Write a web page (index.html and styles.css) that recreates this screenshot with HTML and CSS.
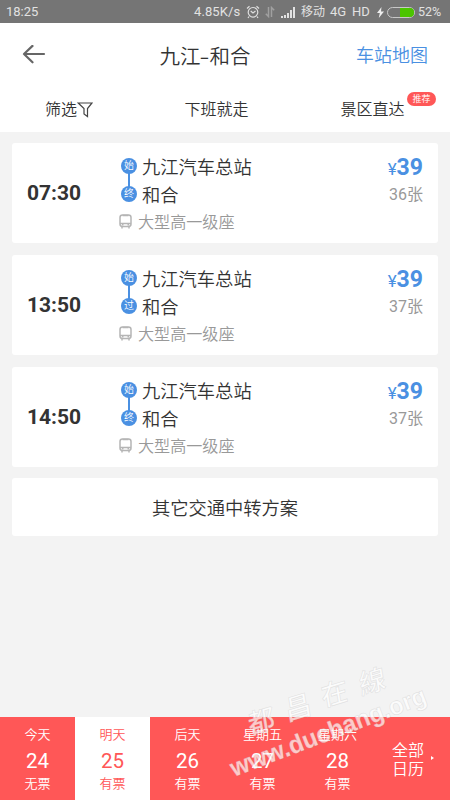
FILE: index.html
```html
<!DOCTYPE html>
<html lang="zh-CN">
<head>
<meta charset="utf-8">
<title>九江-和合</title>
<link rel="stylesheet" href="styles.css">
</head>
<body>
<div class="status">
  <span class="clock">18:25</span>
  <span class="speed">4.85K/s</span>
  <svg class="alarm" width="14" height="14" viewBox="0 0 14 14" fill="none" stroke="#dedede" stroke-width="1.2"><circle cx="7" cy="7.3" r="4.8"/><path d="M1 3.5 3.5 1.2M13 3.5 10.500 1.200M3 11.500 2 13M11 11.500 12 13M4.700 6 7 8 9.500 6"/></svg>
  <svg class="data" width="10" height="12" viewBox="0 0 10 12" fill="none" stroke="#a0a0a0" stroke-width="1.500"><path d="M3.500 1v9.500L.8 7.800M6.500 11V1.500L9.200 4.200"/></svg>
  <svg class="signal" width="15" height="11" viewBox="0 0 15 11" fill="#e2e2e2"><path d="M0 9h2v2H0zM3 8h2v3H3zM6 6h2v5H6zM9 3h2v8H9zM12 0h2v11h-2z"/></svg>
  <span class="carrier">移动</span>
  <span class="net">4G</span>
  <span class="hd">HD</span>
  <svg class="bolt" width="7" height="11" viewBox="0 0 7 11" fill="#eee"><path d="M4.500 0 0 6h2.800L1.800 11 7 4.500H4z"/></svg>
  <span class="battery"><span class="charge"></span></span>
  <span class="percent">52%</span>
</div>
<header class="header">
  <svg width="24" height="20" viewBox="0 0 24 20" fill="none" stroke="#666" stroke-width="2.200" stroke-linecap="round" stroke-linejoin="round"><path d="M22 9H2M10.500 .9 2 9l8.500 8.300"/></svg>
  <h1 class="title">九江<span class="dash">-</span>和合</h1>
  <span class="map">车站地图</span>
</header>
<nav class="tabs">
  <span class="tab filter">筛选<svg width="16" height="16" viewBox="0 0 16 16" fill="none" stroke="#444" stroke-width="1.200"><path d="M1.200 1H15L10.500 6.500v8L7 12V6.500z"/></svg></span>
  <span class="tab">下班就走</span>
  <span class="tab direct">景区直达<span class="badge">推荐</span></span>
</nav>
<main class="list">
  <article class="card">
    <time class="time">07:30</time>
    <div class="route">
      <div class="stop linked"><span class="dot">始</span>九江汽车总站</div>
      <div class="stop"><span class="dot">终</span>和合</div>
      <div class="seat"><svg width="13" height="15" viewBox="0 0 13 15" fill="none" stroke="#b5b5b5" stroke-width="1.500"><rect x="1" y="1" width="11" height="11.500" rx="2.500"/><path d="M1 9.500h11M3.500 1.500h6M3 12v2.500M10 12v2.500M3 10.700h1.500M8.500 10.700H10"/></svg>大型高一级座</div>
    </div>
    <div class="fare"><div class="price"><span class="yen">¥</span>39</div><div class="left">36张</div></div>
  </article>
  <article class="card">
    <time class="time">13:50</time>
    <div class="route">
      <div class="stop linked"><span class="dot">始</span>九江汽车总站</div>
      <div class="stop"><span class="dot">过</span>和合</div>
      <div class="seat"><svg width="13" height="15" viewBox="0 0 13 15" fill="none" stroke="#b5b5b5" stroke-width="1.500"><rect x="1" y="1" width="11" height="11.500" rx="2.500"/><path d="M1 9.500h11M3.500 1.500h6M3 12v2.500M10 12v2.500M3 10.700h1.500M8.500 10.700H10"/></svg>大型高一级座</div>
    </div>
    <div class="fare"><div class="price"><span class="yen">¥</span>39</div><div class="left">37张</div></div>
  </article>
  <article class="card">
    <time class="time">14:50</time>
    <div class="route">
      <div class="stop linked"><span class="dot">始</span>九江汽车总站</div>
      <div class="stop"><span class="dot">终</span>和合</div>
      <div class="seat"><svg width="13" height="15" viewBox="0 0 13 15" fill="none" stroke="#b5b5b5" stroke-width="1.500"><rect x="1" y="1" width="11" height="11.500" rx="2.500"/><path d="M1 9.500h11M3.500 1.500h6M3 12v2.500M10 12v2.500M3 10.700h1.500M8.500 10.700H10"/></svg>大型高一级座</div>
    </div>
    <div class="fare"><div class="price"><span class="yen">¥</span>39</div><div class="left">37张</div></div>
  </article>
  <div class="other">其它交通中转方案</div>
</main>
<footer class="dates">
  <div class="day"><span>今天</span><b>24</b><span>无票</span></div>
  <div class="day active"><span>明天</span><b>25</b><span>有票</span></div>
  <div class="day"><span>后天</span><b>26</b><span>有票</span></div>
  <div class="day"><span>星期五</span><b>27</b><span>有票</span></div>
  <div class="day"><span>星期六</span><b>28</b><span>有票</span></div>
  <div class="all">全部<br>日历<i class="arrow"></i></div>
</footer>
<svg class="watermark" width="224" height="180" viewBox="0 -30 224 180">
  <g class="mark-cn"><text transform="translate(24 79) rotate(-17) skewX(-8)">都</text><text transform="translate(61 65) rotate(-17) skewX(-8)">昌</text><text transform="translate(97 51) rotate(-17) skewX(-8)">在</text><text transform="translate(135 39) rotate(-17) skewX(-8)">線</text></g>
  <text class="mark-url" transform="translate(8 121) rotate(-21)" textLength="208" lengthAdjust="spacingAndGlyphs">www.duchang.org</text>
</svg>
</body>
</html>
```
FILE: styles.css
```css
* { box-sizing: border-box; }
body {
  margin: 0;
  width: 450px;
  height: 800px;
  overflow: hidden;
  position: relative;
  display: flex;
  flex-direction: column;
  background: #f3f3f3;
  color: #333;
  font-family: Roboto, "Noto Sans CJK SC", sans-serif;
  font-weight: 350;
}
svg { display: block; flex: none; }
.status {
  height: 23px;
  flex: none;
  display: flex;
  align-items: center;
  padding: 1px 6px 0 6px;
  background: #757575;
  color: #e2e2e2;
  font-size: 13px;
  font-weight: 400;
  line-height: 22px;
  white-space: nowrap;
}
.clock { width: 188px; flex: none; }
.speed { width: 52px; flex: none; letter-spacing: .1px; }
.alarm { margin-right: 5px; }
.data { margin-right: 6px; }
.signal { margin-right: 5px; }
.carrier { width: 29px; font-size: 12px; flex: none; }
.net { width: 22px; flex: none; }
.hd { width: 25px; flex: none; }
.bolt { margin-right: 3px; }
.battery {
  width: 28px;
  height: 11px;
  flex: none;
  display: flex;
  justify-content: flex-end;
  border: 1px solid #c8c8c8;
  border-radius: 6px;
  margin-right: 3px;
}
.charge { width: 14px; background: #4bc400; border-radius: 0 4px 4px 0; }
.percent { font-size: 12.500px; }
.header {
  height: 63px;
  flex: none;
  display: grid;
  grid-template-columns: 110px 146px 150px;
  align-items: center;
  padding: 0 22px;
  background: #fff;
}
.title {
  margin: 0;
  text-align: center;
  font-family: "Noto Sans CJK SC", sans-serif;
  font-size: 20.500px;
  font-weight: 350;
  white-space: nowrap;
}
.dash { display: inline-block; transform: scaleX(1.400); padding: 0 1px; }
.map { color: #4a90e2; font-size: 18px; text-align: right; position: relative; top: -1px; }
.tabs {
  height: 46px;
  flex: none;
  display: grid;
  grid-template-columns: 138px 157px 1fr;
  padding-top: 1px;
  background: #fff;
  font-size: 16px;
  line-height: 46px;
}
.tab { display: flex; justify-content: center; position: relative; }
.filter { align-items: center; }
.badge {
  position: absolute;
  left: 112px;
  top: 5px;
  width: 29px;
  height: 14px;
  border-radius: 7px;
  background: #ff5757;
  color: #fff;
  font-size: 9px;
  line-height: 14px;
  text-align: center;
}
.list { flex: 1; padding: 11px 12px 0; }
.card {
  height: 100px;
  margin-bottom: 12px;
  padding: 0 15px 0 15px;
  display: grid;
  grid-template-columns: 92px 1fr 80px;
  background: #fff;
  border-radius: 3px;
}
.time { align-self: center; font-size: 21px; font-weight: 700; }
.route { padding-top: 9px; }
.stop { display: flex; align-items: center; height: 28px; gap: 5px; padding-left: 2px; font-size: 18.300px; position: relative; }
.dot {
  width: 16px;
  height: 16px;
  position: relative;
  border-radius: 50%;
  background: #4a90e2;
  color: #fff;
  font-size: 10px;
  line-height: 16px;
  text-align: center;
}
.linked::before { content: ""; position: absolute; left: 9px; top: 17px; width: 2px; height: 18px; background: #4a90e2; }
.seat { display: flex; align-items: center; height: 25px; gap: 6px; color: #999; font-size: 16.100px; }
.seat svg { margin-top: 2px; }
.fare { padding-top: 11px; text-align: right; }
.price { color: #4a90e2; font-size: 23px; font-weight: 700; line-height: 28px; }
.yen { font-size: 17px; font-weight: 400; }
.left { color: #999; font-size: 16px; line-height: 25px; font-weight: 400; position: relative; top: -1px; }
.other {
  height: 58px;
  margin-top: -1px;
  border-radius: 3px;
  background: #fff;
  font-size: 18.300px;
  line-height: 61px;
  text-align: center;
}
.dates {
  height: 83px;
  flex: none;
  display: grid;
  grid-template-columns: repeat(6, 75px);
  background: #ff5757;
  color: #fff;
}
.day { display: flex; flex-direction: column; align-items: center; padding-top: 8px; font-size: 13px; line-height: 20px; }
.day b { font-size: 20.500px; font-weight: 400; line-height: 32px; margin-bottom: -3px; }
.active { background: #fff; color: #ff5757; }
.all { position: relative; padding: 24px 0 0 17px; font-size: 16px; line-height: 19px; }
.arrow { position: absolute; left: 56px; top: 39px; border-left: 3px solid #fff; border-top: 2px solid transparent; border-bottom: 2px solid transparent; }
.watermark { position: absolute; left: 226px; top: 626px; pointer-events: none; fill: #fff; fill-opacity: .7; stroke: #bbb; stroke-opacity: .35; stroke-width: .7px; }
.mark-cn { font: 500 27px "Noto Sans CJK TC", sans-serif; }
.mark-url { font: 700 25px "Liberation Sans", sans-serif; }
```
